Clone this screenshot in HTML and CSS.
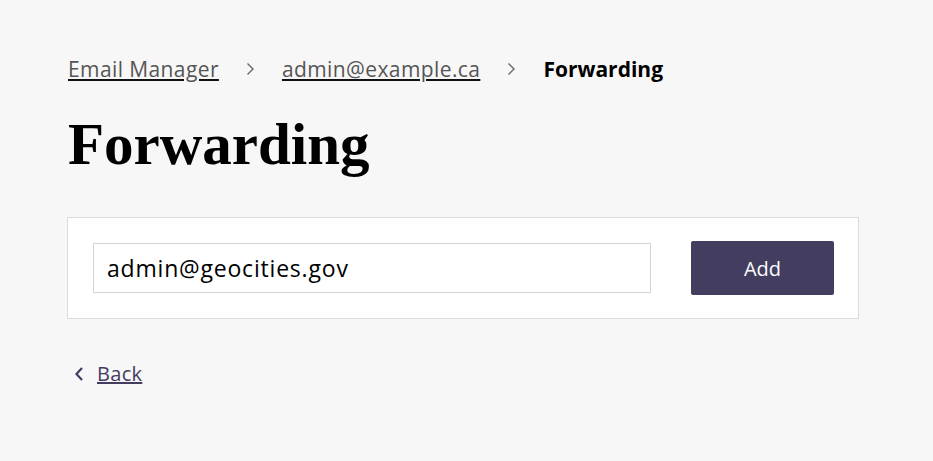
FILE: index.html
```html
<!DOCTYPE html>
<html>
<head>
    <title>Forwarding</title>
    <link rel="stylesheet" href="styles.css">
</head>
<body>
    <div class="container">
        <nav class="crumbs">
            <a href="#">Email Manager</a>
            <svg class="sep" width="9" height="14" viewBox="0 0 9 14"><path d="M1.5 1.5 L7 7 L1.5 12.5" fill="none" stroke="#666" stroke-width="1.4"/></svg>
            <a href="#">admin@example.ca</a>
            <svg class="sep" width="9" height="14" viewBox="0 0 9 14"><path d="M1.5 1.5 L7 7 L1.5 12.5" fill="none" stroke="#666" stroke-width="1.4"/></svg>
            <span class="current">Forwarding</span>
        </nav>

        <h1>Forwarding</h1>

        <form class="card">
            <input type="text" class="field" value="admin@geocities.gov">
            <button type="button" class="add">Add</button>
        </form>

        <a href="#" class="back">
            <svg width="10" height="16" viewBox="0 0 10 16"><path d="M8 2 L2.5 8 L8 14" fill="none" stroke="#433d60" stroke-width="2.2"/></svg>
            <span>Back</span>
        </a>
    </div>
</body>
</html>
```

FILE: styles.css
```css
body {
    font-family: 'Open Sans', sans-serif;
    background-color: #f7f7f7;
    color: #000;
    margin: 0;
    padding: 0;
}

.container {
    width: 792px;
    margin-left: 67px;
    padding-top: 54px;
}

.crumbs {
    display: flex;
    align-items: center;
    gap: 27px;
    font-size: 21px;
    letter-spacing: 0.4px;
    line-height: 30px;
    padding-left: 1px;
}

.crumbs a {
    color: #555;
    text-decoration-color: #111;
}

.crumbs .current {
    font-weight: 700;
    letter-spacing: 0;
}

h1 {
    font-family: 'Liberation Serif', serif;
    font-size: 59px;
    font-weight: 700;
    margin: 24px 0 37px 1px;
    line-height: 72px;
}

.card {
    display: flex;
    align-items: center;
    justify-content: space-between;
    background-color: #fff;
    border: 1px solid #dcdcdc;
    padding: 23px 24px 23px 25px;
    margin: 0;
}

.field {
    width: 558px;
    height: 50px;
    box-sizing: border-box;
    border: 1px solid #d4d4d4;
    padding: 0 13px;
    font-family: 'Open Sans', sans-serif;
    font-size: 23px;
    letter-spacing: 0.8px;
    color: #000;
}

.add {
    width: 143px;
    height: 54px;
    background-color: #433d60;
    color: #fff;
    border: none;
    border-radius: 2px;
    font-family: 'Open Sans', sans-serif;
    font-size: 20px;
    font-weight: 500;
}

.back {
    display: inline-flex;
    align-items: center;
    gap: 13px;
    margin: 41px 0 0 7px;
    color: #433d60;
    font-size: 20px;
    letter-spacing: 0.3px;
    text-decoration: none;
}

.back span {
    text-decoration: underline;
}
```
